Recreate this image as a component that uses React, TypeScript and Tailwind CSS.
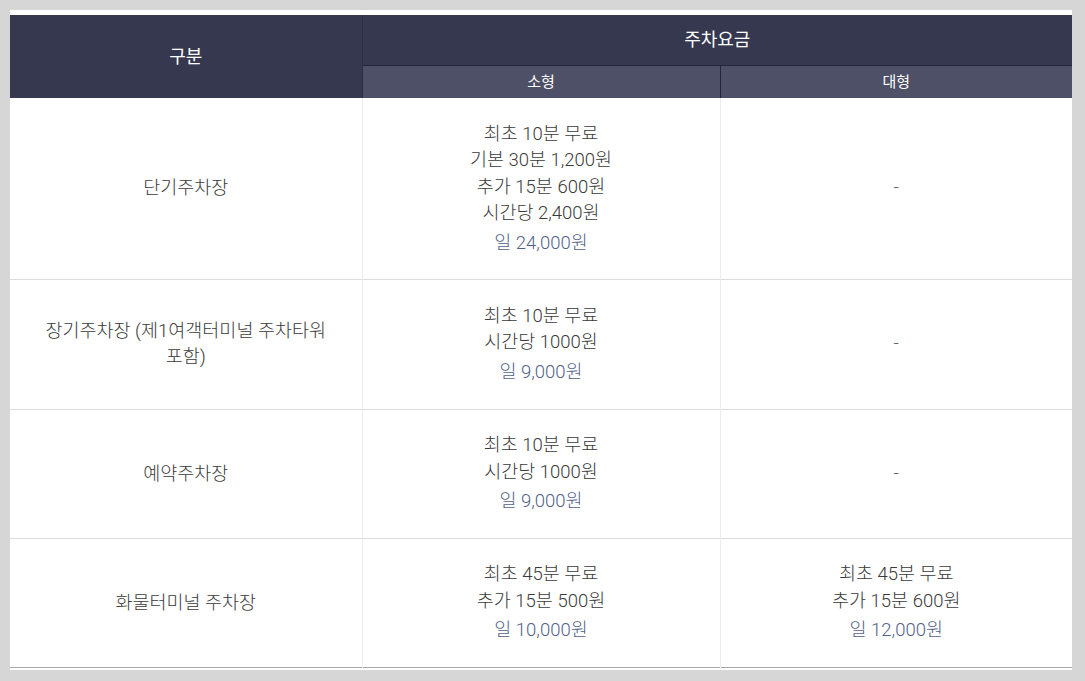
import React from 'react';

interface FeeRow {
  name: string;
  height: string;
  small: string[];
  smallDay: string;
  large?: string[];
  largeDay?: string;
}

const rows: FeeRow[] = [
  {
    name: '단기주차장',
    height: 'h-[181px]',
    small: ['최초 10분 무료', '기본 30분 1,200원', '추가 15분 600원', '시간당 2,400원'],
    smallDay: '일 24,000원',
  },
  {
    name: '장기주차장 (제1여객터미널 주차타워 포함)',
    height: 'h-[130px]',
    small: ['최초 10분 무료', '시간당 1000원'],
    smallDay: '일 9,000원',
  },
  {
    name: '예약주차장',
    height: 'h-[129px]',
    small: ['최초 10분 무료', '시간당 1000원'],
    smallDay: '일 9,000원',
  },
  {
    name: '화물터미널 주차장',
    height: 'h-[129px]',
    small: ['최초 45분 무료', '추가 15분 500원'],
    smallDay: '일 10,000원',
    large: ['최초 45분 무료', '추가 15분 600원'],
    largeDay: '일 12,000원',
  },
];

const FeeCell: React.FC<{ lines?: string[]; day?: string; last?: boolean }> = ({ lines, day, last }) => (
  <td
    className={`px-5 py-2 text-center align-middle ${last ? '' : 'border-r border-[#ececec]'}`}
  >
    {lines ? (
      <>
        {lines.map((l) => (
          <div key={l} className="leading-[26.5px]">
            {l}
          </div>
        ))}
        <div className="mt-[3px] leading-[26.5px] text-[#52628a]">{day}</div>
      </>
    ) : (
      <span className="text-[#666]">-</span>
    )}
  </td>
);

export default function App() {
  return (
    <div
      className="w-[1085px] h-[681px] bg-[#d6d6d6] pt-[10px] pl-[10px]"
      style={{ fontFamily: 'Roboto, "Noto Sans CJK KR", sans-serif' }}
    >
      <div className="w-[1062px] h-[660px] bg-white pt-[5px]">
        <table className="w-full border-collapse table-fixed text-[18.5px] font-light text-[#3a3a3a] break-keep">
          <colgroup>
            <col className="w-[352px]" />
            <col className="w-[358px]" />
            <col className="w-[352px]" />
          </colgroup>
          <thead>
            <tr className="h-[50px] bg-[#35384f] text-white">
              <th
                rowSpan={2}
                className="border-r border-[#2d3044] text-[18px] font-normal align-middle"
              >
                구분
              </th>
              <th colSpan={2} className="border-b border-[#23253a] text-[18px] font-normal">
                주차요금
              </th>
            </tr>
            <tr className="h-[33px] bg-[#4d5066] text-white text-[15px]">
              <th className="border-r border-[#23253a] font-normal">소형</th>
              <th className="font-normal">대형</th>
            </tr>
          </thead>
          <tbody>
            {rows.map((r, i) => (
              <tr
                key={r.name}
                className={`${r.height} ${i === rows.length - 1 ? 'border-b border-[#a9a9a9]' : 'border-b border-[#dcdcdc]'}`}
              >
                <td className="px-[26px] py-2 text-center align-middle leading-[26px] border-r border-[#ececec]">
                  {r.name}
                </td>
                <FeeCell lines={r.small} day={r.smallDay} />
                <FeeCell lines={r.large} day={r.largeDay} last />
              </tr>
            ))}
          </tbody>
        </table>
      </div>
    </div>
  );
}
